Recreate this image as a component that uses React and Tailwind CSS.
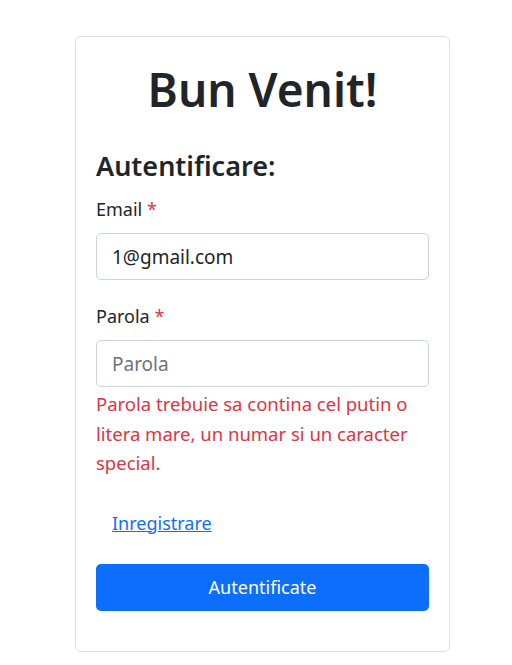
import React, { useState } from "react";

export default function App() {
  const [email, setEmail] = useState("1@gmail.com");
  const [parola, setParola] = useState("");

  return (
    <div className="min-h-screen bg-white pt-[36px] text-[#212529] font-['Noto_Sans',sans-serif]">
      <div className="ml-[75px] w-[375px] border border-[#dee2e6] rounded-[6px] px-[20px] pt-[21px] pb-[40px]">
        <h1 className="text-center text-[46px] leading-[62px] font-semibold">Bun Venit!</h1>

        <h3 className="mt-[30px] text-[27px] leading-[32px] font-semibold">Autentificare:</h3>

        {/* Email */}
        <label className="block mt-[15px] text-[18px] leading-[24px]">
          Email <span className="text-[#dc3545]">*</span>
        </label>
        <input
          value={email}
          onChange={(e) => setEmail(e.target.value)}
          className="mt-[12px] block w-full h-[47px] border border-[#ced4da] rounded-[5px] px-[15px] text-[19px] outline-none"
        />

        {/* Parola */}
        <label className="block mt-[24px] text-[18px] leading-[24px]">
          Parola <span className="text-[#dc3545]">*</span>
        </label>
        <input
          type="password"
          placeholder="Parola"
          value={parola}
          onChange={(e) => setParola(e.target.value)}
          className="mt-[12px] block w-full h-[47px] border border-[#ced4da] rounded-[5px] px-[15px] text-[19px] outline-none placeholder:text-[#6c757d]"
        />
        <div className="mt-[2px] text-[18.5px] leading-[29.5px] text-[#dc3545]">
          Parola trebuie sa contina cel putin o litera mare, un numar si un caracter special.
        </div>

        <div className="mt-[32px] pl-[16px] text-[18px] leading-[27px]">
          <a href="#" className="text-[#0d6efd] underline">Inregistrare</a>
        </div>

        <button className="mt-[27px] w-full h-[47px] rounded-[5px] bg-[#0d6efd] text-white text-[18px]">
          Autentificate
        </button>
      </div>
    </div>
  );
}
